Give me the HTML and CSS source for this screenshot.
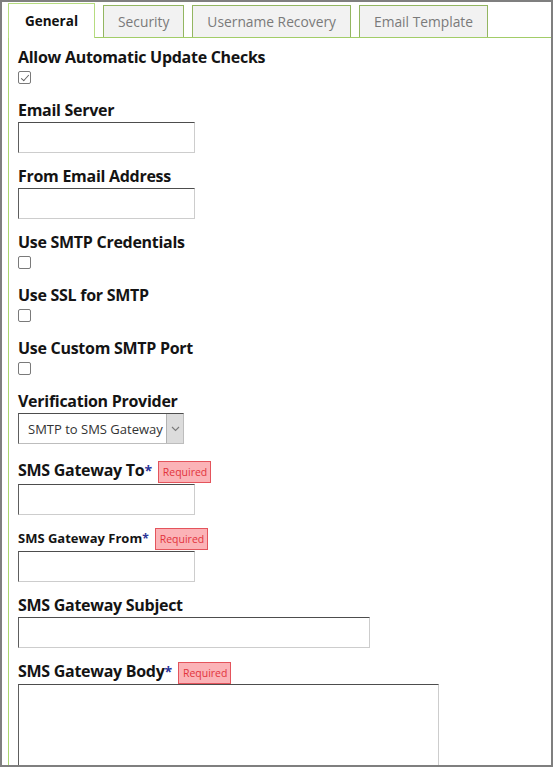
FILE: index.html
```html
<!DOCTYPE html>
<html lang="en">
<head>
<meta charset="utf-8">
<title>Settings</title>
<link rel="stylesheet" href="styles.css">
</head>
<body>
<div class="frame">
  <div class="tabs">
    <div class="tab active">General</div>
    <div class="tab">Security</div>
    <div class="tab">Username Recovery</div>
    <div class="tab">Email Template</div>
  </div>
  <div class="panel">
    <div class="field check-field">
      <label class="lbl">Allow Automatic Update Checks</label>
      <input type="checkbox" class="cb" checked>
    </div>
    <div class="field">
      <label class="lbl">Email Server</label>
      <input type="text" class="txt">
    </div>
    <div class="field">
      <label class="lbl">From Email Address</label>
      <input type="text" class="txt">
    </div>
    <div class="field check-field">
      <label class="lbl">Use SMTP Credentials</label>
      <input type="checkbox" class="cb">
    </div>
    <div class="field check-field">
      <label class="lbl">Use SSL for SMTP</label>
      <input type="checkbox" class="cb">
    </div>
    <div class="field check-field">
      <label class="lbl">Use Custom SMTP Port</label>
      <input type="checkbox" class="cb">
    </div>
    <div class="field select-field">
      <label class="lbl">Verification Provider</label>
      <div class="select">
        <select><option>SMTP to SMS Gateway</option></select>
        <span class="arrow"><svg width="9" height="6" viewBox="0 0 9 6"><path d="M1 1l3.5 3.5L8 1" fill="none" stroke="#7a7a7a" stroke-width="1.1"/></svg></span>
      </div>
    </div>
    <div class="field">
      <label class="lbl">SMS Gateway To<span class="req">*</span><span class="badge">Required</span></label>
      <input type="text" class="txt">
    </div>
    <div class="field">
      <label class="lbl small">SMS Gateway From<span class="req">*</span><span class="badge">Required</span></label>
      <input type="text" class="txt">
    </div>
    <div class="field">
      <label class="lbl">SMS Gateway Subject</label>
      <input type="text" class="txt wide">
    </div>
    <div class="field">
      <label class="lbl">SMS Gateway Body<span class="req">*</span><span class="badge">Required</span></label>
      <textarea class="area"></textarea>
    </div>
  </div>
</div>
</body>
</html>
```
FILE: styles.css
```css
html, body {
  margin: 0;
  padding: 0;
  background: #fff;
}
body {
  font-family: "Open Sans", "Noto Sans", sans-serif;
  color: #141414;
}
.frame {
  width: 553px;
  height: 767px;
  box-sizing: border-box;
  border: 2px solid #7f7f7f;
  overflow: hidden;
  display: flex;
  flex-direction: column;
}
.tabs {
  display: flex;
  align-items: flex-end;
  gap: 8px;
  padding: 1px 0 0 6px;
}
.tab {
  box-sizing: border-box;
  height: 32px;
  padding: 0 14px;
  display: flex;
  align-items: center;
  font-size: 13.8px;
  line-height: 18px;
  color: #7a7a7a;
  background: #f2f2f2;
  border: 1px solid #93b661;
  border-bottom: 0;
}
.tab.active {
  height: 35px;
  margin-bottom: -1px;
  padding: 0 16px;
  background: #fff;
  color: #111;
  font-weight: 700;
  font-size: 13.5px;
  border-color: #b6dc80;
  position: relative;
  z-index: 1;
}
.panel {
  flex: 1;
  margin-left: 6px;
  border-top: 1px solid #a2cd68;
  border-left: 1px solid #aad56f;
  padding: 8px 0 0 9px;
}
.field {
  margin-bottom: 12px;
}
.check-field {
  margin-bottom: 15px;
}
.select-field {
  margin-bottom: 15px;
}
.lbl {
  display: block;
  font-size: 16px;
  line-height: 22px;
  font-weight: 700;
  letter-spacing: -0.28px;
  color: #141414;
}
.lbl.small {
  font-size: 13px;
  letter-spacing: 0;
}
.req {
  color: #2b3499;
  font-size: 14px;
}
.lbl.small .req {
  font-size: 12px;
}
.badge {
  display: inline-block;
  margin-left: 6px;
  padding: 0 3px 0 4px;
  font-size: 10.5px;
  line-height: 20px;
  font-weight: 400;
  letter-spacing: 0;
  color: #e2333d;
  background: #fbb3b7;
  border: 1px solid #e4545c;
}
.cb {
  appearance: none;
  -webkit-appearance: none;
  display: grid;
  place-content: center;
  width: 13px;
  height: 13px;
  margin: 3px 0 0;
  box-sizing: border-box;
  border: 1px solid #7a7a7a;
  border-radius: 2px;
  background: #fff;
}
.cb:checked::before {
  content: "";
  width: 7px;
  height: 3px;
  border-left: 1.5px solid #5f5f5f;
  border-bottom: 1.5px solid #5f5f5f;
  transform: translateY(-1px) rotate(-48deg);
}
.txt, .area {
  display: block;
  box-sizing: border-box;
  margin: 1px 0 0;
  width: 177px;
  height: 31px;
  border: 1px solid;
  border-color: #4d4d4d #cdcdcd #cdcdcd #5e5e5e;
  background: #fff;
  font-family: inherit;
  font-size: 13px;
  padding: 2px 6px;
}
.txt.wide {
  width: 352px;
}
.area {
  width: 421px;
  height: 110px;
  margin-top: 0;
  resize: none;
}
.select {
  display: flex;
  width: 166px;
  height: 31px;
  box-sizing: border-box;
  margin-top: 1px;
  border: 1px solid;
  border-color: #4d4d4d #bdbdbd #bdbdbd #5e5e5e;
  background: #fff;
}
.select select {
  appearance: none;
  -webkit-appearance: none;
  flex: 1;
  min-width: 0;
  border: 0;
  margin: 0;
  padding: 0 0 0 9px;
  background: #fff;
  font-family: inherit;
  font-size: 13px;
  color: #333;
  outline: none;
}
.arrow {
  width: 16px;
  display: flex;
  align-items: center;
  justify-content: center;
  background: #dcdcdc;
  border-left: 1px solid #b3b3b3;
}
```
